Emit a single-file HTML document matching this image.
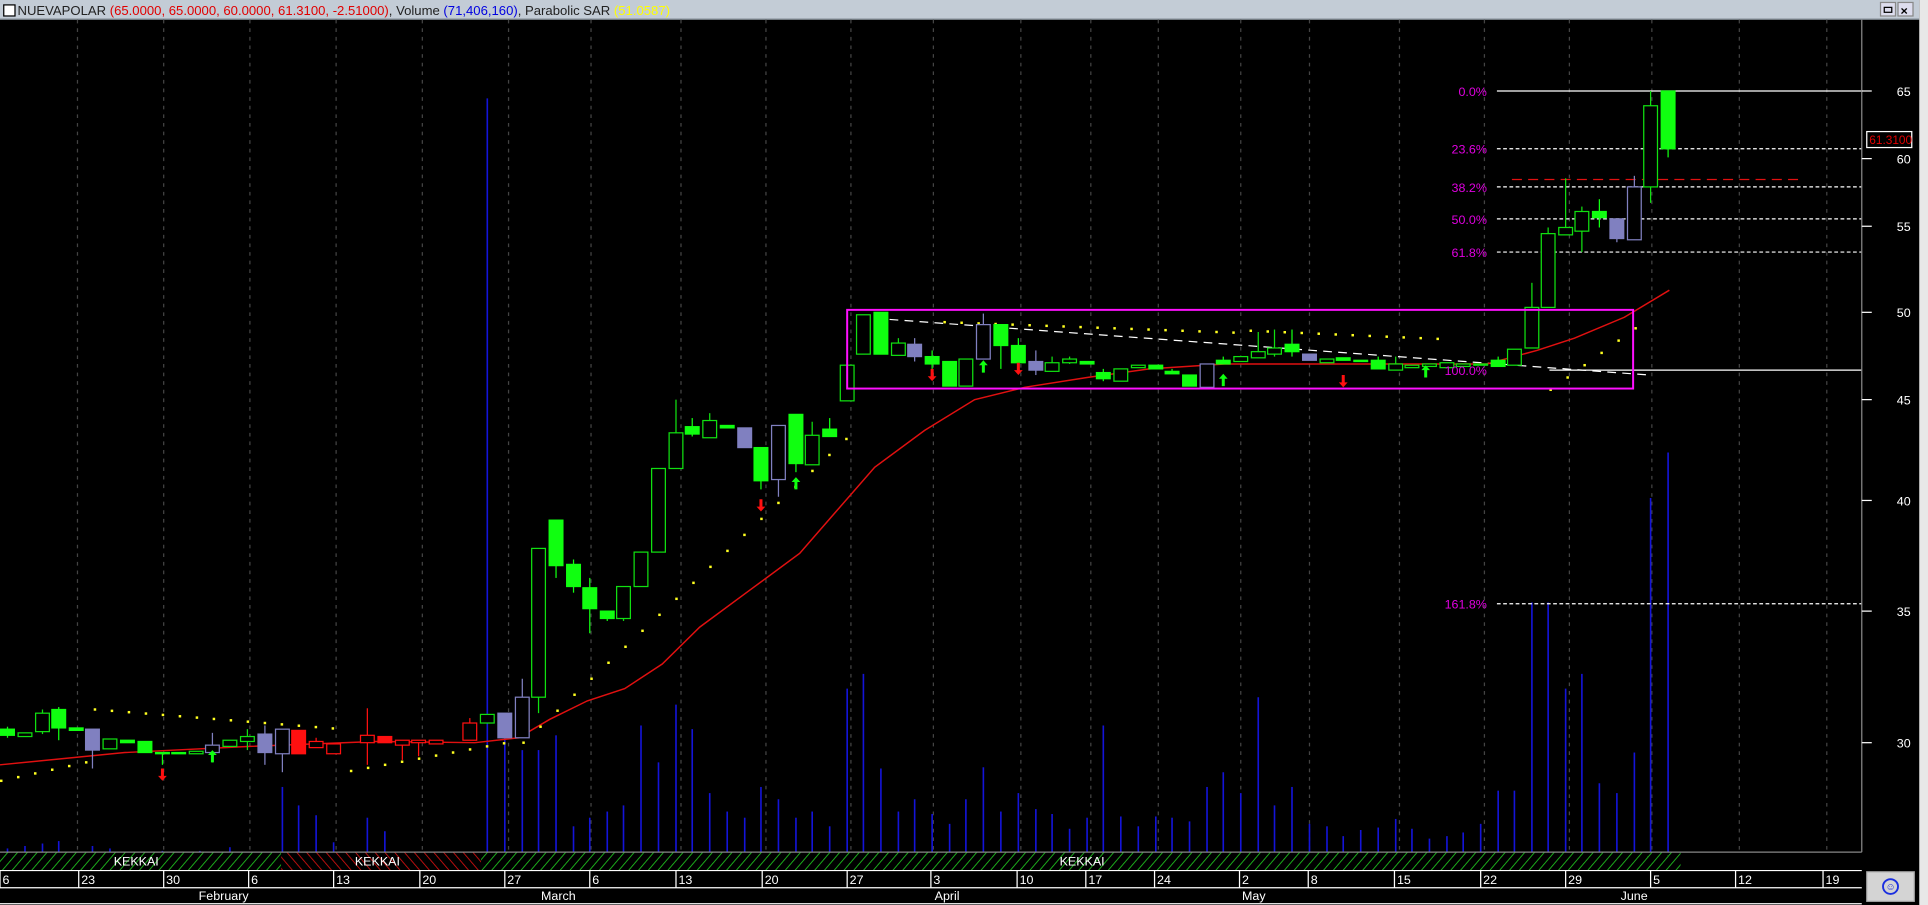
<!DOCTYPE html>
<html><head><meta charset="utf-8"><style>
html,body{margin:0;padding:0;background:#000;overflow:hidden}
svg{display:block}
</style></head><body>
<svg id="s" width="1928" height="905" viewBox="0 0 1543 736" preserveAspectRatio="none" xmlns="http://www.w3.org/2000/svg" font-family="Liberation Sans, sans-serif">
<defs>
<pattern id="hg" width="6" height="6" patternUnits="userSpaceOnUse" patternTransform="rotate(40)"><rect width="6" height="6" fill="#000"/><line x1="0" y1="0" x2="0" y2="6" stroke="#1fc21f" stroke-width="1.4"/></pattern>
<pattern id="hr" width="6" height="6" patternUnits="userSpaceOnUse" patternTransform="rotate(-40)"><rect width="6" height="6" fill="#000"/><line x1="0" y1="0" x2="0" y2="6" stroke="#d01010" stroke-width="1.4"/></pattern>
</defs>
<rect width="1543" height="736" fill="#000"/>
<rect x="1536" y="0" width="7" height="736" fill="#e8e8e8"/>
<!-- title bar -->
<rect x="0" y="0" width="1536" height="16" fill="#c3ccd6"/>
<rect x="0" y="15" width="1536" height="1" fill="#8a949e"/>
<rect x="3" y="4" width="9" height="9" fill="#fff" stroke="#000"/>
<text x="14" y="12" font-size="10.5" fill="#222">NUEVAPOLAR <tspan fill="#e00000">(65.0000, 65.0000, 60.0000, 61.3100, -2.51000)</tspan>, Volume <tspan fill="#0000e0">(71,406,160)</tspan>, Parabolic SAR <tspan fill="#ffff00">(51.0587)</tspan></text>
<rect x="1505" y="2" width="12" height="11" fill="#dde" stroke="#888"/>
<rect x="1519" y="2" width="12" height="11" fill="#dde" stroke="#888"/>
<text x="1521" y="12" font-size="10" font-weight="bold" fill="#000">×</text>
<rect x="1508" y="6" width="6" height="4" fill="none" stroke="#000"/>
<g id="g"></g>
<!-- fib labels -->
<g font-size="10" fill="#e000e0" text-anchor="end">
<text x="1190" y="78">0.0%</text>
<text x="1190" y="125">23.6%</text>
<text x="1190" y="156">38.2%</text>
<text x="1190" y="182">50.0%</text>
<text x="1190" y="209">61.8%</text>
<text x="1190" y="305">100.0%</text>
<text x="1190" y="495">161.8%</text>
</g>
<!-- axis labels -->
<g font-size="10" fill="#fff">
<text x="1518" y="78">65</text><text x="1518" y="133">60</text><text x="1518" y="188">55</text><text x="1518" y="258">50</text><text x="1518" y="329">45</text><text x="1518" y="411">40</text><text x="1518" y="501">35</text><text x="1518" y="608">30</text>
</g>
<rect x="1494" y="107" width="36" height="13" fill="#000" stroke="#fff"/>
<text x="1496" y="117" font-size="9.5" fill="#e00000">61.3100</text>
<!-- kekkai -->
<rect x="0" y="693" width="1490" height="15" fill="#000"/>
<rect x="0" y="693" width="225" height="15" fill="url(#hg)"/>
<rect x="225" y="693" width="160" height="15" fill="url(#hr)"/>
<rect x="385" y="693" width="960" height="15" fill="url(#hg)"/>
<line x1="0" y1="693" x2="1490" y2="693" stroke="#888"/>
<g font-size="10" fill="#fff"><text x="91" y="704">KEKKAI</text><text x="284" y="704">KEKKAI</text><text x="848" y="704">KEKKAI</text></g>
<!-- date axis -->
<rect x="0" y="708" width="1490" height="28" fill="#000"/>
<line x1="0" y1="708" x2="1490" y2="708" stroke="#fff"/>
<line x1="0" y1="722" x2="1490" y2="722" stroke="#fff"/>
<line x1="0" y1="735" x2="1490" y2="735" stroke="#fff"/>
<g id="dl" font-size="10" fill="#fff"></g>
<g font-size="10" fill="#fff"><text x="159" y="732">February</text><text x="433" y="732">March</text><text x="748" y="732">April</text><text x="994" y="732">May</text><text x="1297" y="732">June</text></g>
<rect x="1494" y="709" width="38" height="24" fill="#d4d4d4" stroke="#aaa"/>
<circle cx="1513" cy="721" r="6" fill="none" stroke="#1a2ee0" stroke-width="1.5"/>
<text x="1509" y="724" font-size="8" fill="#1a2ee0">☺</text>
</svg>
<script>
var g=document.getElementById('g'),NS='http://www.w3.org/2000/svg',h='';
function Y(p){return 74+(Math.log(65)-Math.log(p))*685.6}
// grid
var gx=[62,131,200,269,338,407,473,545,613,681,747,817,873,927,993,1048,1120,1188,1256,1322,1392,1462];
gx.forEach(function(x){h+='<line x1="'+x+'" y1="16" x2="'+x+'" y2="693" stroke="#444" stroke-dasharray="3,4"/>'});
// volume
var vol=[[6,690],[20,688],[34,686],[47,684],[74,688],[88,690],[130,692],[160,692],[184,689],[226,640],[239,655],[253,663],[267,685],[294,665],[308,676],[390,80],[404,598],[418,610],[431,610],[445,598],[459,672],[472,665],[486,660],[499,655],[513,590],[527,620],[541,573],[554,593],[568,645],[582,660],[596,665],[609,640],[623,650],[637,665],[650,660],[664,672],[678,560],[691,548],[705,625],[719,660],[732,650],[746,662],[760,670],[773,650],[787,624],[801,660],[815,645],[829,658],[842,662],[856,674],[870,665],[883,590],[897,664],[911,672],[925,664],[938,665],[952,668],[966,640],[979,628],[993,645],[1007,567],[1020,655],[1034,640],[1048,670],[1062,672],[1075,680],[1089,675],[1103,673],[1117,666],[1130,674],[1144,682],[1158,680],[1171,677],[1185,670],[1199,643],[1212,643],[1226,490],[1239,490],[1253,560],[1266,548],[1280,637],[1294,645],[1308,612],[1321,405],[1335,368]];
vol.forEach(function(v){h+='<line x1="'+v[0]+'" y1="693" x2="'+v[0]+'" y2="'+v[1]+'" stroke="#1414d8" stroke-width="1.3"/>'});
// fib lines
h+='<line x1="1198" y1="74" x2="1490" y2="74" stroke="#fff"/>';
[121,152,178,205].forEach(function(y){h+='<line x1="1198" y1="'+y+'" x2="1490" y2="'+y+'" stroke="#fff" stroke-dasharray="3,2"/>'});
h+='<line x1="1198" y1="491" x2="1490" y2="491" stroke="#fff" stroke-dasharray="3,2"/>';
h+='<line x1="1240" y1="301" x2="1490" y2="301" stroke="#fff"/>';
h+='<line x1="1210" y1="146" x2="1440" y2="146" stroke="#e01010" stroke-dasharray="8,5"/>';
h+='<line x1="688" y1="258" x2="1320" y2="305" stroke="#fff" stroke-dasharray="7,5"/>';
// right axis ticks
h+='<line x1="1490" y1="16" x2="1490" y2="693" stroke="#888"/>';
[74,129,184,254,325,407,497,604].forEach(function(y){h+='<line x1="1490" y1="'+y+'" x2="1498" y2="'+y+'" stroke="#fff"/>'});
// MA
var ma=[[0,622],[100,612],[200,607],[300,603],[380,604],[415,600],[440,585],[470,570],[500,560],[530,540],[560,510],[600,480],[640,450],[670,415],[700,380],[740,350],[780,325],[820,315],[870,307],[920,300],[980,296],[1100,296],[1190,296],[1230,285],[1260,275],[1300,258],[1336,236]];
h+='<polyline fill="none" stroke="#e01010" stroke-width="1.2" points="'+ma.map(function(p){return p.join(',')}).join(' ')+'"/>';
// SAR dots
var sar=[];
for(var i=0;i<15;i++)sar.push([75+i*13.6,576+i*1.1]);
for(var i=0;i<6;i++)sar.push([0+i*13.6,634-i*3]);
for(var i=0;i<10;i++)sar.push([280+i*13.6,626-i*2.5]);
for(var i=0;i<20;i++)sar.push([418+i*13.6,603-i*13]);
for(var i=0;i<18;i++)sar.push([755+i*13.6,261+i*0.5]);
for(var i=0;i<12;i++)sar.push([1000+i*13.6,268+i*0.6]);
for(var i=0;i<6;i++)sar.push([1240+i*13.6,316-i*10]);
sar.forEach(function(p){h+='<rect x="'+p[0]+'" y="'+p[1]+'" width="2" height="2" fill="#ffff20"/>'});
// candles [x, top, bottom, wickTop, wickBot, type] f=green fill,h=hollow,p=purple,r=red,rh=red hollow,ph=purple hollow
var C=[[6,593,598,591,600,'f'],[20,596,599,596,599,'h'],[34,580,595,577,597,'h'],[47,577,592,575,602,'f'],[61,592,594,592,594,'f'],[74,593,610,593,625,'p'],[88,601,609,601,609,'h'],[102,602,604,602,604,'f'],[116,603,612,603,612,'f'],[130,612,613,612,622,'f'],[143,612,613,612,613,'f'],[157,611,613,611,613,'h'],[170,606,612,596,620,'ph'],[184,602,607,602,607,'h'],[198,599,603,593,610,'h'],[212,597,612,590,622,'p'],[226,593,613,593,628,'ph'],[239,594,613,594,613,'r'],[253,603,608,600,608,'rh'],[267,605,613,605,613,'rh'],[294,598,604,576,622,'rh'],[308,599,604,599,604,'r'],[322,602,606,602,618,'rh'],[335,602,604,602,615,'rh'],[349,602,605,602,605,'rh'],[376,588,602,584,602,'rh'],[390,581,588,581,588,'h'],[404,580,600,580,600,'p'],[418,567,600,552,600,'ph'],
[431,446,567,446,580,'h'],[445,423,460,423,470,'f'],[459,459,477,455,482,'f'],[472,478,495,470,515,'f'],[486,497,503,497,505,'f'],[499,477,503,477,505,'h'],[513,449,477,449,477,'h'],[527,381,449,381,449,'h'],[541,352,381,325,381,'h'],[554,347,353,340,355,'f'],[568,342,356,336,356,'h'],[582,346,348,346,348,'f'],[596,348,364,348,364,'p'],[609,364,391,364,398,'f'],[623,346,390,346,404,'ph'],[637,337,377,337,384,'f'],[650,354,378,343,378,'h'],[664,349,355,340,355,'f'],[678,297,326,285,326,'h'],
[691,256,288,256,288,'h'],[705,254,288,254,288,'f'],[719,279,289,275,289,'h'],[732,280,290,275,294,'p'],[746,290,296,285,300,'f'],[760,294,314,294,314,'f'],[773,292,314,292,314,'h'],[787,264,292,255,292,'ph'],[801,264,281,264,300,'f'],[815,281,295,275,300,'f'],[829,294,301,285,305,'p'],[842,295,302,290,302,'h'],[856,292,295,290,296,'h'],[870,294,296,294,296,'f'],[883,303,308,300,310,'f'],[897,300,310,300,310,'h'],[911,297,299,297,299,'h'],[925,297,300,297,300,'f'],[938,302,304,300,304,'f'],[952,305,314,305,314,'f'],[966,296,315,296,315,'ph'],[979,293,296,290,296,'f'],[993,290,294,290,294,'h'],[1007,286,291,270,291,'h'],[1020,283,288,268,290,'h'],[1034,280,286,268,290,'f'],[1048,288,293,288,293,'p'],[1062,292,295,292,295,'h'],[1075,291,293,291,293,'f'],[1089,293,294,293,294,'f'],[1103,293,300,290,300,'f'],[1117,296,301,290,301,'h'],[1130,297,299,297,299,'h'],[1144,296,298,296,298,'h'],[1158,295,299,295,299,'h'],[1171,296,298,296,298,'h'],[1185,296,297,296,297,'h'],[1199,293,298,290,298,'f'],[1212,284,297,284,297,'h'],
[1226,250,283,230,283,'h'],[1239,190,250,185,250,'h'],[1253,185,191,145,191,'h'],[1266,172,188,168,205,'h'],[1280,172,177,162,185,'f'],[1294,178,194,178,197,'p'],[1308,152,195,143,195,'ph'],[1321,86,152,74,165,'h'],[1335,74,121,74,128,'f']];
C.forEach(function(c){var x=c[0],t=c[5],col={f:'#10ff10',h:'#10e010',p:'#8080c0',ph:'#8080c0',r:'#ff1010',rh:'#ff1010'}[t];
var fill=(t=='f'||t=='p'||t=='r')?col:'none';
h+='<line x1="'+x+'" y1="'+c[3]+'" x2="'+x+'" y2="'+c[4]+'" stroke="'+col+'"/>';
h+='<rect x="'+(x-5.5)+'" y="'+c[1]+'" width="11" height="'+Math.max(1,c[2]-c[1])+'" fill="'+(fill=='none'?'#000':fill)+'" stroke="'+col+'"/>';});
// arrows
function arr(x,y,up,col){if(up)h+='<path d="M'+x+' '+(y-5)+' L'+(x-3.5)+' '+(y-1)+' L'+(x-1.2)+' '+(y-1)+' L'+(x-1.2)+' '+(y+5)+' L'+(x+1.2)+' '+(y+5)+' L'+(x+1.2)+' '+(y-1)+' L'+(x+3.5)+' '+(y-1)+'Z" fill="'+col+'"/>';
else h+='<path d="M'+x+' '+(y+5)+' L'+(x-3.5)+' '+(y+1)+' L'+(x-1.2)+' '+(y+1)+' L'+(x-1.2)+' '+(y-5)+' L'+(x+1.2)+' '+(y-5)+' L'+(x+1.2)+' '+(y+1)+' L'+(x+3.5)+' '+(y+1)+'Z" fill="'+col+'"/>';}
[[130,630],[609,411],[746,305],[815,300],[1075,310]].forEach(function(a){arr(a[0],a[1],0,'#ff1010')});
[[170,615],[637,393],[787,298],[979,309],[1141,302]].forEach(function(a){arr(a[0],a[1],1,'#10ff10')});
h+='<rect x="678" y="252" width="629" height="64" fill="none" stroke="#ff10ff" stroke-width="1.6"/>';
g.innerHTML=h;
var dl=document.getElementById('dl'),d='';
[[1,'6'],[64,'23'],[132,'30'],[200,'6'],[268,'13'],[337,'20'],[405,'27'],[473,'6'],[542,'13'],[611,'20'],[679,'27'],[746,'3'],[815,'10'],[870,'17'],[925,'24'],[993,'2'],[1048,'8'],[1117,'15'],[1186,'22'],[1254,'29'],[1322,'5'],[1390,'12'],[1460,'19']].forEach(function(t){d+='<text x="'+(t[0]+1)+'" y="719">'+t[1]+'</text><line x1="'+(t[0]-1)+'" y1="708" x2="'+(t[0]-1)+'" y2="722" stroke="#fff"/>'});
dl.innerHTML=d;
</script>
</body></html>
